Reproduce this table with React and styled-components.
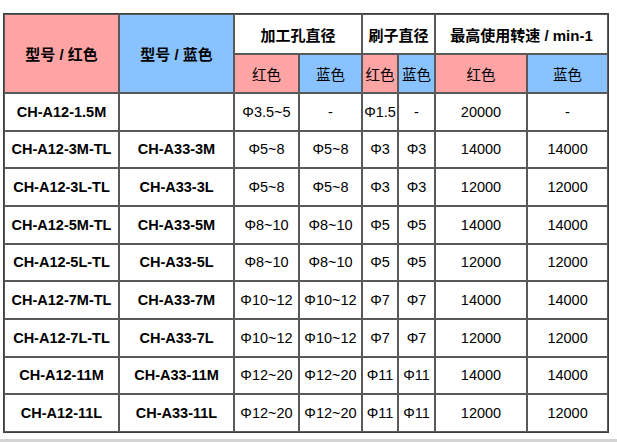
import React from 'react'
import styled, { createGlobalStyle } from 'styled-components'

const RED = '#ffa4a4'
const BLUE = '#88c3ff'

const COLUMNS = [115, 115, 65, 63, 36, 37, 92, 81]

const ROWS = [
  ['CH-A12-1.5M', '', 'Φ3.5~5', '-', 'Φ1.5', '-', '20000', '-'],
  ['CH-A12-3M-TL', 'CH-A33-3M', 'Φ5~8', 'Φ5~8', 'Φ3', 'Φ3', '14000', '14000'],
  ['CH-A12-3L-TL', 'CH-A33-3L', 'Φ5~8', 'Φ5~8', 'Φ3', 'Φ3', '12000', '12000'],
  ['CH-A12-5M-TL', 'CH-A33-5M', 'Φ8~10', 'Φ8~10', 'Φ5', 'Φ5', '14000', '14000'],
  ['CH-A12-5L-TL', 'CH-A33-5L', 'Φ8~10', 'Φ8~10', 'Φ5', 'Φ5', '12000', '12000'],
  ['CH-A12-7M-TL', 'CH-A33-7M', 'Φ10~12', 'Φ10~12', 'Φ7', 'Φ7', '14000', '14000'],
  ['CH-A12-7L-TL', 'CH-A33-7L', 'Φ10~12', 'Φ10~12', 'Φ7', 'Φ7', '12000', '12000'],
  ['CH-A12-11M', 'CH-A33-11M', 'Φ12~20', 'Φ12~20', 'Φ11', 'Φ11', '14000', '14000'],
  ['CH-A12-11L', 'CH-A33-11L', 'Φ12~20', 'Φ12~20', 'Φ11', 'Φ11', '12000', '12000']
]

const SUB_HEADS = ['红色', '蓝色', '红色', '蓝色', '红色', '蓝色']

const GlobalStyle = createGlobalStyle`
  html, body {
    margin: 0;
    padding: 0;
    background: #fff;
  }
  body {
    font-family: "Liberation Sans", Arial, "Noto Sans CJK SC", sans-serif;
    color: #000;
  }
`

const Page = styled.div`
  padding: 13px 0 0 3px;
  width: 617px;
  box-sizing: border-box;
`

const Table = styled.table`
  width: 606px;
  table-layout: fixed;
  border-collapse: separate;
  border-spacing: 0;
  border: 1px solid #3f3f3f;
`

const HeadRow = styled.tr`
  height: ${p => p.$h}px;
`

const Row = styled.tr`
  height: 37.67px;
`

const Cell = styled.td`
  box-sizing: border-box;
  padding: 0;
  border: 1px solid #595959;
  text-align: center;
  vertical-align: middle;
  white-space: nowrap;
  overflow: hidden;
  font-size: 14.5px;
  font-weight: ${p => (p.$bold ? 700 : 400)};
  background: ${p => p.$bg || '#fff'};
  font-family: "Liberation Sans", Arial, "Noto Sans CJK SC", sans-serif;
`

const HeadCell = styled(Cell)`
  font-size: 15px;
`

const SubCell = styled(Cell)`
  font-size: 14.5px;
  font-weight: 400;
`

const Footer = styled.div`
  margin-top: 6px;
  height: 3px;
  margin-left: -3px;
  width: 617px;
  background: #d4d4d4;
`

export default function App() {
  return (
    <Page>
      <GlobalStyle />
      <Table>
        <colgroup>
          {COLUMNS.map((w, i) => (
            <col key={i} style={{ width: w }} />
          ))}
        </colgroup>
        <tbody>
          <HeadRow $h={40}>
            <HeadCell rowSpan={2} $bold $bg={RED}>
              型号 / 红色
            </HeadCell>
            <HeadCell rowSpan={2} $bold $bg={BLUE}>
              型号 / 蓝色
            </HeadCell>
            <HeadCell colSpan={2} $bold>
              加工孔直径
            </HeadCell>
            <HeadCell colSpan={2} $bold>
              刷子直径
            </HeadCell>
            <HeadCell colSpan={2} $bold>
              最高使用转速 / min-1
            </HeadCell>
          </HeadRow>
          <HeadRow $h={39}>
            {SUB_HEADS.map((label, i) => (
              <SubCell key={i} $bg={i % 2 === 0 ? RED : BLUE}>
                {label}
              </SubCell>
            ))}
          </HeadRow>
          {ROWS.map(row => (
            <Row key={row[0]}>
              {row.map((value, i) => (
                <Cell key={i} $bold={i < 2}>
                  {value}
                </Cell>
              ))}
            </Row>
          ))}
        </tbody>
      </Table>
      <Footer />
    </Page>
  )
}
